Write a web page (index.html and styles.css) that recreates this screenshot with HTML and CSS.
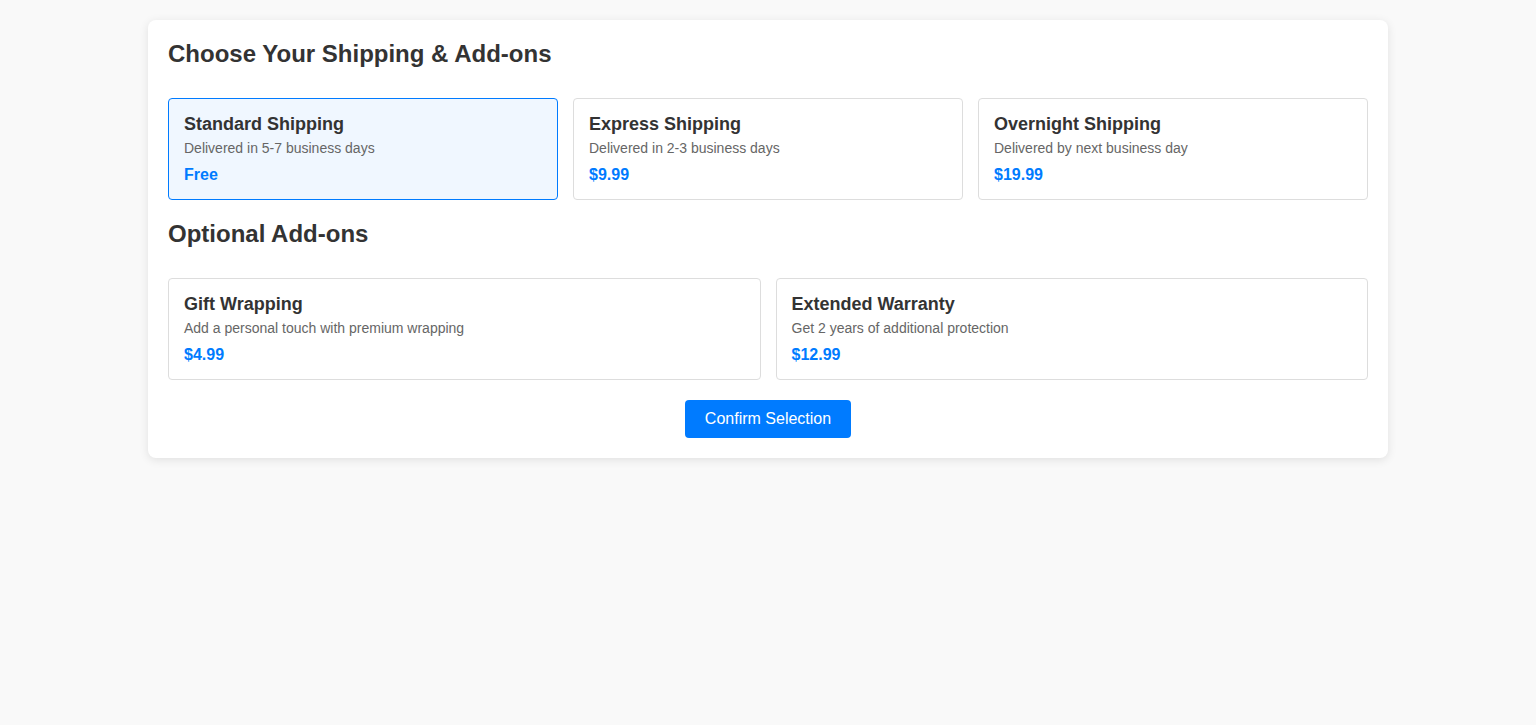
FILE: index.html
```html
<!DOCTYPE html>
<html lang="en">
<head>
<meta charset="utf-8">
<title>Shipping & Add-ons</title>
<link rel="stylesheet" href="styles.css">
</head>
<body>
<div class="container">
  <h2 class="section-title">Choose Your Shipping &amp; Add-ons</h2>
  <div class="options options-3">
    <div class="option selected">
      <h3 class="option-title">Standard Shipping</h3>
      <p class="option-desc">Delivered in 5-7 business days</p>
      <div class="option-price">Free</div>
    </div>
    <div class="option">
      <h3 class="option-title">Express Shipping</h3>
      <p class="option-desc">Delivered in 2-3 business days</p>
      <div class="option-price">$9.99</div>
    </div>
    <div class="option">
      <h3 class="option-title">Overnight Shipping</h3>
      <p class="option-desc">Delivered by next business day</p>
      <div class="option-price">$19.99</div>
    </div>
  </div>
  <h2 class="section-title">Optional Add-ons</h2>
  <div class="options options-2">
    <div class="option">
      <h3 class="option-title">Gift Wrapping</h3>
      <p class="option-desc">Add a personal touch with premium wrapping</p>
      <div class="option-price">$4.99</div>
    </div>
    <div class="option">
      <h3 class="option-title">Extended Warranty</h3>
      <p class="option-desc">Get 2 years of additional protection</p>
      <div class="option-price">$12.99</div>
    </div>
  </div>
  <div class="actions">
    <button class="confirm-btn">Confirm Selection</button>
  </div>
</div>
</body>
</html>
```
FILE: styles.css
```css
* { box-sizing: border-box; }
body {
  margin: 0;
  padding: 20px 0;
  background: #f9f9f9;
  font-family: "Liberation Sans", Arial, Helvetica, sans-serif;
  color: #333;
}
.container {
  max-width: 1240px;
  margin: 0 auto;
  background: #fff;
  border-radius: 8px;
  padding: 20px;
  box-shadow: 0 2px 10px rgba(0, 0, 0, 0.1);
}
.section-title {
  margin: 0 0 30px;
  font-size: 24px;
  font-weight: bold;
  color: #333;
}
.options {
  display: grid;
  gap: 15px;
  margin-bottom: 20px;
}
.options-3 { grid-template-columns: repeat(3, 1fr); }
.options-2 { grid-template-columns: repeat(2, 1fr); }
.option {
  border: 1px solid #ddd;
  border-radius: 4px;
  padding: 15px;
  background: #fff;
}
.option.selected {
  border-color: #007bff;
  background: #f0f7ff;
}
.option-title {
  margin: 0 0 5px;
  font-size: 18px;
  font-weight: bold;
  color: #333;
}
.option-desc {
  margin: 0 0 10px;
  font-size: 14px;
  color: #666;
}
.option-price {
  font-size: 16px;
  font-weight: bold;
  color: #007bff;
}
.actions {
  display: flex;
  justify-content: center;
}
.confirm-btn {
  font-family: inherit;
  font-size: 16px;
  padding: 10px 20px;
  background: #007bff;
  color: #fff;
  border: none;
  border-radius: 4px;
  cursor: pointer;
}
```
